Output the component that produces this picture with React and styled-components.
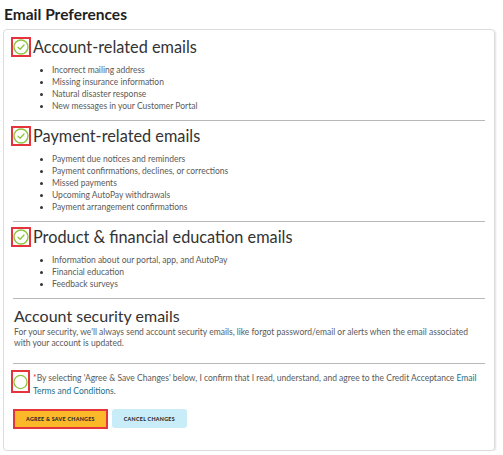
import React from "react";
import styled, { createGlobalStyle } from "styled-components";

const GlobalStyle = createGlobalStyle`
  body {
    margin: 0;
    background: #fff;
    font-family: Lato, "Noto Sans", sans-serif;
    color: #333;
  }
`;

const Page = styled.div`
  width: 503px;
  padding: 4px 0 0 3px;
  box-sizing: border-box;
`;

const Title = styled.h2`
  margin: 0 0 5px 1px;
  font-size: 15.5px;
  line-height: 20px;
  font-weight: 700;
  color: #1f1f1f;
`;

const Card = styled.div`
  width: 492px;
  box-sizing: border-box;
  border: 1px solid #dcdcdc;
  border-radius: 4px;
  box-shadow: 1px 1px 2px rgba(0, 0, 0, 0.12);
  padding: 2px 8px 21px 7px;
`;

const Section = styled.div`
  padding: 5px 0 8px;
  border-bottom: 1px solid #b8b8b8;
  margin: 0 1px 0 2px;
`;

const Header = styled.div`
  display: flex;
  align-items: center;
  margin-left: -2px;
`;

const IconBox = styled.span`
  display: flex;
  align-items: center;
  justify-content: center;
  width: ${(p) => p.w || 20}px;
  height: ${(p) => p.h || 20}px;
  box-sizing: border-box;
  border: 2px solid #e5343d;
  flex-shrink: 0;
`;

const SectionTitle = styled.h3`
  margin: 0 0 0 2px;
  font-size: 16.3px;
  line-height: 20px;
  font-weight: 400;
  color: #333;
`;

const List = styled.ul`
  margin: 7px 0 0;
  padding-left: 39px;
  font-size: 8.5px;
  line-height: 12px;
  color: #5a5a5a;
  li::marker {
    color: #333;
  }
`;

const SecurityTitle = styled.h3`
  margin: 0 0 0 1px;
  font-size: 16px;
  line-height: 22px;
  font-weight: 400;
  color: #333;
`;

const Paragraph = styled.p`
  margin: 0 0 0 1px;
  max-width: 460px;
  font-size: 8.5px;
  line-height: 11px;
  color: #5a5a5a;
`;

const Security = styled(Section)`
  padding: 6px 0 14px;
`;

const Consent = styled.div`
  display: flex;
  align-items: flex-start;
  margin-top: 6px;
`;

const ConsentText = styled.p`
  margin: 2px 0 0 3px;
  font-size: 8.5px;
  line-height: 13px;
  color: #5a5a5a;
`;

const Req = styled.span`
  color: #e5343d;
`;

const Link = styled.a`
  color: #1b6f8a;
  text-decoration: none;
`;

const Buttons = styled.div`
  display: flex;
  gap: 4px;
  margin: 11px 0 0 2px;
`;

const Button = styled.button`
  height: ${(p) => (p.primary ? 20 : 19)}px;
  padding: 0 ${(p) => (p.primary ? 11 : 12)}px;
  border: ${(p) => (p.primary ? "2px solid #e5343d" : "none")};
  border-radius: ${(p) => (p.primary ? 0 : 3)}px;
  background: ${(p) => (p.primary ? "#fbb829" : "#c9ecf9")};
  color: #2a2a2a;
  font-family: Lato, "Noto Sans", sans-serif;
  font-size: 5.3px;
  font-weight: 900;
  letter-spacing: 0.3px;
  text-transform: uppercase;
  cursor: pointer;
`;

const CheckCircle = ({ checked }) => (
  <svg width="16" height="16" viewBox="0 0 16 16">
    <circle cx="8" cy="8" r="7" fill="none" stroke="#8cc63f" strokeWidth="1.4" />
    {checked && (
      <path
        d="M5 8.2 L7.1 10.2 L11 6"
        fill="none"
        stroke="#8cc63f"
        strokeWidth="1.3"
        strokeLinecap="round"
        strokeLinejoin="round"
      />
    )}
  </svg>
);

const sections = [
  {
    title: "Account-related emails",
    items: [
      "Incorrect mailing address",
      "Missing insurance information",
      "Natural disaster response",
      "New messages in your Customer Portal",
    ],
  },
  {
    title: "Payment-related emails",
    items: [
      "Payment due notices and reminders",
      "Payment confirmations, declines, or corrections",
      "Missed payments",
      "Upcoming AutoPay withdrawals",
      "Payment arrangement confirmations",
    ],
  },
  {
    title: "Product & financial education emails",
    items: [
      "Information about our portal, app, and AutoPay",
      "Financial education",
      "Feedback surveys",
    ],
  },
];

export default function App() {
  return (
    <Page>
      <GlobalStyle />
      <Title>Email Preferences</Title>
      <Card>
        {sections.map((s) => (
          <Section key={s.title}>
            <Header>
              <IconBox>
                <CheckCircle checked />
              </IconBox>
              <SectionTitle>{s.title}</SectionTitle>
            </Header>
            <List>
              {s.items.map((i) => (
                <li key={i}>{i}</li>
              ))}
            </List>
          </Section>
        ))}
        <Security>
          <SecurityTitle>Account security emails</SecurityTitle>
          <Paragraph>
            For your security, we'll always send account security emails, like
            forgot password/email or alerts when the email associated with your
            account is updated.
          </Paragraph>
        </Security>
        <Consent>
          <IconBox w={19} h={23}>
            <CheckCircle />
          </IconBox>
          <ConsentText>
            <Req>*</Req>By selecting 'Agree &amp; Save Changes' below, I confirm
            that I read, understand, and agree to the Credit Acceptance{" "}
            <Link href="#">Email</Link> <Link href="#">Terms and Conditions</Link>.
          </ConsentText>
        </Consent>
        <Buttons>
          <Button primary>Agree &amp; Save Changes</Button>
          <Button>Cancel Changes</Button>
        </Buttons>
      </Card>
    </Page>
  );
}
